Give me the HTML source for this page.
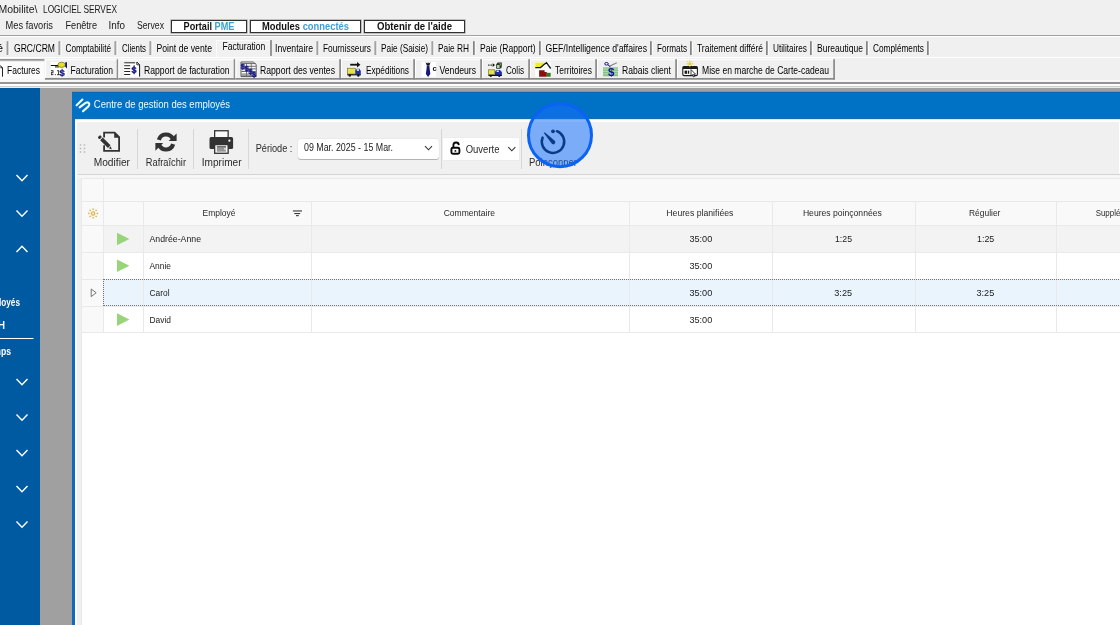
<!DOCTYPE html>
<html lang="fr">
<head>
<meta charset="utf-8">
<title>LOGICIEL SERVEX</title>
<style>
*{box-sizing:border-box;margin:0;padding:0}
html,body{width:1120px;height:625px;overflow:hidden;background:#f0f0f0}
body{position:relative;font-family:"Liberation Sans",sans-serif;font-size:11px;color:#000}
.a{position:absolute}
svg{position:absolute;left:0;top:0;overflow:visible;will-change:transform}
svg text{font-family:"Liberation Sans",sans-serif;white-space:pre}
#top{left:0;top:0;width:1120px;height:88px;background:#f0f0f0}
.mb{position:absolute;top:19.5px;height:13.5px;background:#fff;border:1px solid #303030;box-shadow:0 0 0 0.6px rgba(60,60,60,.45)}
.sep{position:absolute;top:41px;width:2px;height:14px;border-left:1px solid #6e6e6e;border-right:1px solid #fff}
.tb{position:absolute;top:59px;height:20px;border-top:1px solid #fff;border-left:1px solid #fff;border-right:1px solid #868686;border-bottom:1px solid #868686;background:#f0f0f0}
#side{left:0;top:88px;width:40px;height:537px;background:#005aa2}
#gray{left:40px;top:88px;width:1080px;height:537px;background:#a0a0a0}
#win{left:72px;top:92px;width:1048px;height:533px;background:#0072c6}
#inner{left:75px;top:118px;width:1045px;height:507px;background:#fff;border-top:1px solid #1b6cb6;box-shadow:inset 0 1px 0 #cdeeff}
#lb{left:72px;top:118px;width:3px;height:507px;background:#0f6cbd}
#panel{left:77px;top:122px;width:1042px;height:503px;background:#f0f0f0}
#grid{left:82px;top:178px;width:1038px;height:447px;background:#fff}
.vsep{position:absolute;top:129px;width:1px;height:40px;background:#d6d6d6}
.hl{position:absolute;height:1px;background:#e9e9e9}
.vl{position:absolute;width:1px;background:#e9e9e9}
</style>
</head>
<body>
<div id="top" class="a"></div>
<div class="mb" style="left:171px;width:75.5px"></div>
<div class="mb" style="left:250px;width:111px"></div>
<div class="mb" style="left:364px;width:100.5px"></div>
<div class="a" style="left:0;top:35px;width:1120px;height:1px;background:#a0a0a0"></div>
<div class="a" style="left:0;top:36px;width:1120px;height:1px;background:#fff"></div>
<div class="a" style="left:216px;top:40px;width:54px;height:17px;background:#f1f1f1;border-top:1px solid #fbfbfb;border-left:1px solid #fbfbfb"></div>
<div class="a" style="left:0;top:57px;width:1120px;height:1px;background:#fff"></div>
<div id="gray" class="a"></div>
<div id="side" class="a"></div>
<div id="win" class="a"></div>
<div id="lb" class="a"></div>
<div id="inner" class="a"></div>
<div id="panel" class="a"></div>
<div id="grid" class="a"></div>
<div class="a" style="left:78px;top:174px;width:1042px;height:1px;background:#d4d4d4"></div>
<div class="a" style="left:78px;top:175px;width:1042px;height:3px;background:#f6f6f6"></div>
<div class="vsep" style="left:137px"></div>
<div class="vsep" style="left:193px"></div>
<div class="vsep" style="left:248px"></div>
<div class="vsep" style="left:440.5px"></div>
<div class="vsep" style="left:520.5px"></div>
<div class="a" style="left:298px;top:139px;width:141px;height:19.5px;background:#fff;border-radius:3px;box-shadow:0 1px 0 #b4b4b4,0 0 0 0.5px #e2e2e2"></div>
<div class="a" style="left:443px;top:137.5px;width:76px;height:22.5px;background:#fff;box-shadow:0 0 0 0.5px #e8e8e8"></div>
<div class="a" style="left:82px;top:178px;width:1038px;height:47px;background:#f9f9f9"></div>
<div class="a" style="left:82px;top:225px;width:21px;height:108px;background:#f9f9f9"></div>
<div class="a" style="left:103px;top:225px;width:1017px;height:27px;background:#f3f3f3"></div>
<div class="a" style="left:103px;top:279px;width:1017px;height:27px;background:#e9f4fd"></div>
<div class="hl" style="left:82px;top:178px;width:1038px"></div>
<div class="hl" style="left:82px;top:201px;width:1038px"></div>
<div class="hl" style="left:82px;top:225px;width:1038px"></div>
<div class="hl" style="left:82px;top:252px;width:1038px"></div>
<div class="hl" style="left:82px;top:279px;width:1038px"></div>
<div class="hl" style="left:82px;top:306px;width:1038px"></div>
<div class="hl" style="left:82px;top:332px;width:1038px"></div>
<div class="vl" style="left:81px;top:178px;height:447px"></div>
<div class="vl" style="left:103px;top:178px;height:155px"></div>
<div class="vl" style="left:143px;top:201px;height:132px"></div>
<div class="vl" style="left:311px;top:201px;height:132px"></div>
<div class="vl" style="left:629px;top:201px;height:132px"></div>
<div class="vl" style="left:772px;top:201px;height:132px"></div>
<div class="vl" style="left:915px;top:201px;height:132px"></div>
<div class="vl" style="left:1056px;top:201px;height:132px"></div>
<div class="a" style="left:103px;top:279px;width:1020px;height:27px;border:1px dotted #777"></div>
<svg width="1120" height="625" viewBox="0 0 1120 625"><rect x="270.1" y="40.1" width="1.8" height="15.8" fill="#8c8c8c"/>
<rect x="6.699999999999999" y="41.2" width="1" height="13.8" fill="#787878"/><rect x="7.699999999999999" y="41.2" width="0.9" height="13.8" fill="#9a9a9a"/><rect x="8.6" y="41.2" width="1" height="13.8" fill="#f9f9f9"/>
<rect x="58.6" y="41.2" width="1" height="13.8" fill="#787878"/><rect x="59.6" y="41.2" width="0.9" height="13.8" fill="#9a9a9a"/><rect x="60.5" y="41.2" width="1" height="13.8" fill="#f9f9f9"/>
<rect x="114.6" y="41.2" width="1" height="13.8" fill="#787878"/><rect x="115.6" y="41.2" width="0.9" height="13.8" fill="#9a9a9a"/><rect x="116.5" y="41.2" width="1" height="13.8" fill="#f9f9f9"/>
<rect x="149.6" y="41.2" width="1" height="13.8" fill="#787878"/><rect x="150.6" y="41.2" width="0.9" height="13.8" fill="#9a9a9a"/><rect x="151.5" y="41.2" width="1" height="13.8" fill="#f9f9f9"/>
<rect x="316.6" y="41.2" width="1" height="13.8" fill="#787878"/><rect x="317.6" y="41.2" width="0.9" height="13.8" fill="#9a9a9a"/><rect x="318.5" y="41.2" width="1" height="13.8" fill="#f9f9f9"/>
<rect x="374.6" y="41.2" width="1" height="13.8" fill="#787878"/><rect x="375.6" y="41.2" width="0.9" height="13.8" fill="#9a9a9a"/><rect x="376.5" y="41.2" width="1" height="13.8" fill="#f9f9f9"/>
<rect x="431.6" y="41.2" width="1" height="13.8" fill="#787878"/><rect x="432.6" y="41.2" width="0.9" height="13.8" fill="#9a9a9a"/><rect x="433.5" y="41.2" width="1" height="13.8" fill="#f9f9f9"/>
<rect x="473.1" y="41.2" width="1" height="13.8" fill="#787878"/><rect x="474.1" y="41.2" width="0.9" height="13.8" fill="#9a9a9a"/><rect x="475" y="41.2" width="1" height="13.8" fill="#f9f9f9"/>
<rect x="539.1" y="41.2" width="1" height="13.8" fill="#787878"/><rect x="540.1" y="41.2" width="0.9" height="13.8" fill="#9a9a9a"/><rect x="541" y="41.2" width="1" height="13.8" fill="#f9f9f9"/>
<rect x="650.1" y="41.2" width="1" height="13.8" fill="#787878"/><rect x="651.1" y="41.2" width="0.9" height="13.8" fill="#9a9a9a"/><rect x="652" y="41.2" width="1" height="13.8" fill="#f9f9f9"/>
<rect x="690.1" y="41.2" width="1" height="13.8" fill="#787878"/><rect x="691.1" y="41.2" width="0.9" height="13.8" fill="#9a9a9a"/><rect x="692" y="41.2" width="1" height="13.8" fill="#f9f9f9"/>
<rect x="766.1" y="41.2" width="1" height="13.8" fill="#787878"/><rect x="767.1" y="41.2" width="0.9" height="13.8" fill="#9a9a9a"/><rect x="768" y="41.2" width="1" height="13.8" fill="#f9f9f9"/>
<rect x="810.1" y="41.2" width="1" height="13.8" fill="#787878"/><rect x="811.1" y="41.2" width="0.9" height="13.8" fill="#9a9a9a"/><rect x="812" y="41.2" width="1" height="13.8" fill="#f9f9f9"/>
<rect x="866.1" y="41.2" width="1" height="13.8" fill="#787878"/><rect x="867.1" y="41.2" width="0.9" height="13.8" fill="#9a9a9a"/><rect x="868" y="41.2" width="1" height="13.8" fill="#f9f9f9"/>
<rect x="927.1" y="41.2" width="1" height="13.8" fill="#787878"/><rect x="928.1" y="41.2" width="0.9" height="13.8" fill="#9a9a9a"/><rect x="929" y="41.2" width="1" height="13.8" fill="#f9f9f9"/>
<rect x="0" y="59.4" width="44.4" height="20.2" fill="#fbfbfb"/>
<rect x="0" y="59.1" width="44.4" height="1.7" fill="#8c8c8c"/>
<rect x="0" y="60.8" width="44.4" height="0.9" fill="#e4e4e4"/>
<rect x="45" y="59.2" width="73.5" height="20.4" fill="#f0f0f0"/>
<rect x="45" y="59.2" width="71.7" height="1" fill="#fff"/>
<rect x="45" y="59.2" width="1" height="18.8" fill="#fff"/>
<rect x="116.7" y="59.2" width="1.8" height="20.4" fill="#8f8f8f"/>
<rect x="45" y="78" width="73.5" height="1.7" fill="#8a8a8a"/>
<rect x="118.5" y="59.2" width="117.0" height="20.4" fill="#f0f0f0"/>
<rect x="118.5" y="59.2" width="115.2" height="1" fill="#fff"/>
<rect x="118.5" y="59.2" width="1" height="18.8" fill="#fff"/>
<rect x="233.7" y="59.2" width="1.8" height="20.4" fill="#8f8f8f"/>
<rect x="118.5" y="78" width="117.0" height="1.7" fill="#8a8a8a"/>
<rect x="235.5" y="59.2" width="105.5" height="20.4" fill="#f0f0f0"/>
<rect x="235.5" y="59.2" width="103.7" height="1" fill="#fff"/>
<rect x="235.5" y="59.2" width="1" height="18.8" fill="#fff"/>
<rect x="339.2" y="59.2" width="1.8" height="20.4" fill="#8f8f8f"/>
<rect x="235.5" y="78" width="105.5" height="1.7" fill="#8a8a8a"/>
<rect x="341" y="59.2" width="74" height="20.4" fill="#f0f0f0"/>
<rect x="341" y="59.2" width="72.2" height="1" fill="#fff"/>
<rect x="341" y="59.2" width="1" height="18.8" fill="#fff"/>
<rect x="413.2" y="59.2" width="1.8" height="20.4" fill="#8f8f8f"/>
<rect x="341" y="78" width="74" height="1.7" fill="#8a8a8a"/>
<rect x="415" y="59.2" width="67" height="20.4" fill="#f0f0f0"/>
<rect x="415" y="59.2" width="65.2" height="1" fill="#fff"/>
<rect x="415" y="59.2" width="1" height="18.8" fill="#fff"/>
<rect x="480.2" y="59.2" width="1.8" height="20.4" fill="#8f8f8f"/>
<rect x="415" y="78" width="67" height="1.7" fill="#8a8a8a"/>
<rect x="482" y="59.2" width="48" height="20.4" fill="#f0f0f0"/>
<rect x="482" y="59.2" width="46.2" height="1" fill="#fff"/>
<rect x="482" y="59.2" width="1" height="18.8" fill="#fff"/>
<rect x="528.2" y="59.2" width="1.8" height="20.4" fill="#8f8f8f"/>
<rect x="482" y="78" width="48" height="1.7" fill="#8a8a8a"/>
<rect x="530" y="59.2" width="67" height="20.4" fill="#f0f0f0"/>
<rect x="530" y="59.2" width="65.2" height="1" fill="#fff"/>
<rect x="530" y="59.2" width="1" height="18.8" fill="#fff"/>
<rect x="595.2" y="59.2" width="1.8" height="20.4" fill="#8f8f8f"/>
<rect x="530" y="78" width="67" height="1.7" fill="#8a8a8a"/>
<rect x="597" y="59.2" width="80" height="20.4" fill="#f0f0f0"/>
<rect x="597" y="59.2" width="78.2" height="1" fill="#fff"/>
<rect x="597" y="59.2" width="1" height="18.8" fill="#fff"/>
<rect x="675.2" y="59.2" width="1.8" height="20.4" fill="#8f8f8f"/>
<rect x="597" y="78" width="80" height="1.7" fill="#8a8a8a"/>
<rect x="677" y="59.2" width="158" height="20.4" fill="#f0f0f0"/>
<rect x="677" y="59.2" width="156.2" height="1" fill="#fff"/>
<rect x="677" y="59.2" width="1" height="18.8" fill="#fff"/>
<rect x="833.2" y="59.2" width="1.8" height="20.4" fill="#8f8f8f"/>
<rect x="677" y="78" width="158" height="1.7" fill="#8a8a8a"/>
<rect x="0" y="80" width="1120" height="2" fill="#f8f8f8"/>
<rect x="0" y="82" width="1120" height="2" fill="#949494"/>
<rect x="0" y="84" width="1120" height="2.2" fill="#fdfdfd"/>
<rect x="0" y="86.2" width="1120" height="1" fill="#c6c6c6"/>
<rect x="0" y="87.2" width="1120" height="0.8" fill="#ececec"/>
<rect x="72" y="91.8" width="1048" height="0.9" fill="#1462ab"/>
<text x="-1.5" y="13" font-size="10" font-weight="normal" fill="#1a1a1a" textLength="39.0" lengthAdjust="spacingAndGlyphs">Mobilite\</text>
<text x="43" y="13" font-size="10" font-weight="normal" fill="#1a1a1a" textLength="74" lengthAdjust="spacingAndGlyphs">LOGICIEL SERVEX</text>
<text x="5.5" y="29.3" font-size="10" font-weight="normal" fill="#1a1a1a" textLength="47.5" lengthAdjust="spacingAndGlyphs">Mes favoris</text>
<text x="65.5" y="29.3" font-size="10" font-weight="normal" fill="#1a1a1a" textLength="31.5" lengthAdjust="spacingAndGlyphs">Fenêtre</text>
<text x="108.5" y="29.3" font-size="10" font-weight="normal" fill="#1a1a1a" textLength="16.5" lengthAdjust="spacingAndGlyphs">Info</text>
<text x="137" y="29.3" font-size="10" font-weight="normal" fill="#1a1a1a" textLength="27" lengthAdjust="spacingAndGlyphs">Servex</text>
<text x="183.6" y="29.6" font-size="10.5" font-weight="bold" fill="#111" textLength="50.8" lengthAdjust="spacingAndGlyphs">Portail <tspan fill="#3c9fd6" font-weight="bold">PME</tspan></text>
<text x="262" y="29.6" font-size="10.5" font-weight="bold" fill="#111" textLength="87" lengthAdjust="spacingAndGlyphs">Modules <tspan fill="#3c9fd6" font-weight="bold">connectés</tspan></text>
<text x="377" y="29.6" font-size="10.5" font-weight="bold" fill="#111" textLength="75" lengthAdjust="spacingAndGlyphs">Obtenir de l&#x27;aide</text>
<text x="14" y="52.3" font-size="11" font-weight="normal" fill="#000" textLength="41" lengthAdjust="spacingAndGlyphs">GRC/CRM</text>
<text x="65.5" y="52.3" font-size="11" font-weight="normal" fill="#000" textLength="45.5" lengthAdjust="spacingAndGlyphs">Comptabilité</text>
<text x="122" y="52.3" font-size="11" font-weight="normal" fill="#000" textLength="24" lengthAdjust="spacingAndGlyphs">Clients</text>
<text x="156.5" y="52.3" font-size="11" font-weight="normal" fill="#000" textLength="55.5" lengthAdjust="spacingAndGlyphs">Point de vente</text>
<text x="275" y="52.3" font-size="11" font-weight="normal" fill="#000" textLength="38" lengthAdjust="spacingAndGlyphs">Inventaire</text>
<text x="323" y="52.3" font-size="11" font-weight="normal" fill="#000" textLength="48" lengthAdjust="spacingAndGlyphs">Fournisseurs</text>
<text x="381" y="52.3" font-size="11" font-weight="normal" fill="#000" textLength="47" lengthAdjust="spacingAndGlyphs">Paie (Saisie)</text>
<text x="438" y="52.3" font-size="11" font-weight="normal" fill="#000" textLength="31" lengthAdjust="spacingAndGlyphs">Paie RH</text>
<text x="480" y="52.3" font-size="11" font-weight="normal" fill="#000" textLength="55.5" lengthAdjust="spacingAndGlyphs">Paie (Rapport)</text>
<text x="545.5" y="52.3" font-size="11" font-weight="normal" fill="#000" textLength="101.5" lengthAdjust="spacingAndGlyphs">GEF/Intelligence d&#x27;affaires</text>
<text x="657" y="52.3" font-size="11" font-weight="normal" fill="#000" textLength="30" lengthAdjust="spacingAndGlyphs">Formats</text>
<text x="697" y="52.3" font-size="11" font-weight="normal" fill="#000" textLength="66" lengthAdjust="spacingAndGlyphs">Traitement différé</text>
<text x="773" y="52.3" font-size="11" font-weight="normal" fill="#000" textLength="34" lengthAdjust="spacingAndGlyphs">Utilitaires</text>
<text x="817" y="52.3" font-size="11" font-weight="normal" fill="#000" textLength="46" lengthAdjust="spacingAndGlyphs">Bureautique</text>
<text x="873" y="52.3" font-size="11" font-weight="normal" fill="#000" textLength="51" lengthAdjust="spacingAndGlyphs">Compléments</text>
<text x="-3" y="52.3" font-size="11" font-weight="normal" fill="#000" textLength="6" lengthAdjust="spacingAndGlyphs">é</text>
<text x="222.5" y="50.4" font-size="11" font-weight="normal" fill="#000" textLength="42.69999999999999" lengthAdjust="spacingAndGlyphs">Facturation</text>
<text x="7" y="73.6" font-size="11" font-weight="normal" fill="#000" textLength="33" lengthAdjust="spacingAndGlyphs">Factures</text>
<text x="70.5" y="73.6" font-size="11" font-weight="normal" fill="#000" textLength="42.5" lengthAdjust="spacingAndGlyphs">Facturation</text>
<text x="144" y="73.6" font-size="11" font-weight="normal" fill="#000" textLength="85.5" lengthAdjust="spacingAndGlyphs">Rapport de facturation</text>
<text x="260" y="73.6" font-size="11" font-weight="normal" fill="#000" textLength="75" lengthAdjust="spacingAndGlyphs">Rapport des ventes</text>
<text x="366" y="73.6" font-size="11" font-weight="normal" fill="#000" textLength="43" lengthAdjust="spacingAndGlyphs">Expéditions</text>
<text x="439.5" y="73.6" font-size="11" font-weight="normal" fill="#000" textLength="36.5" lengthAdjust="spacingAndGlyphs">Vendeurs</text>
<text x="506" y="73.6" font-size="11" font-weight="normal" fill="#000" textLength="18" lengthAdjust="spacingAndGlyphs">Colis</text>
<text x="555" y="73.6" font-size="11" font-weight="normal" fill="#000" textLength="37" lengthAdjust="spacingAndGlyphs">Territoires</text>
<text x="622" y="73.6" font-size="11" font-weight="normal" fill="#000" textLength="49" lengthAdjust="spacingAndGlyphs">Rabais client</text>
<text x="702" y="73.6" font-size="11" font-weight="normal" fill="#000" textLength="127" lengthAdjust="spacingAndGlyphs">Mise en marche de Carte-cadeau</text>
<polyline points="16.5,175 22,180.8 27.5,175" fill="none" stroke="#fff" stroke-width="1.4"/>
<polyline points="16.5,210.5 22,216.3 27.5,210.5" fill="none" stroke="#fff" stroke-width="1.4"/>
<polyline points="16.5,252 22,246.2 27.5,252" fill="none" stroke="#fff" stroke-width="1.4"/>
<polyline points="16.5,379 22,384.8 27.5,379" fill="none" stroke="#fff" stroke-width="1.4"/>
<polyline points="16.5,414.5 22,420.3 27.5,414.5" fill="none" stroke="#fff" stroke-width="1.4"/>
<polyline points="16.5,450 22,455.8 27.5,450" fill="none" stroke="#fff" stroke-width="1.4"/>
<polyline points="16.5,486 22,491.8 27.5,486" fill="none" stroke="#fff" stroke-width="1.4"/>
<polyline points="16.5,521.5 22,527.3 27.5,521.5" fill="none" stroke="#fff" stroke-width="1.4"/>
<rect x="0" y="338" width="33.5" height="1" fill="#fff"/>
<text x="-1" y="305.5" font-size="10" font-weight="bold" fill="#fff" textLength="21" lengthAdjust="spacingAndGlyphs">loyés</text>
<text x="-2" y="329" font-size="10" font-weight="bold" fill="#fff" textLength="7" lengthAdjust="spacingAndGlyphs">H</text>
<text x="-6.8" y="354.5" font-size="10" font-weight="bold" fill="#fff" textLength="17.8" lengthAdjust="spacingAndGlyphs">mps</text>
<g fill="none" stroke="#eefaff" stroke-width="2.1" stroke-linecap="round" stroke-linejoin="round"><path d="M76.6 105.3 L82.4 99.6"/><path d="M79.6 107.4 L85.6 102.9 Q88 101.6 89.2 103.6 Q89.8 105.2 88.4 106.4 L83 111.3"/></g>
<text x="93.8" y="108.4" font-size="10.5" font-weight="normal" fill="#f0f9ff" textLength="136.2" lengthAdjust="spacingAndGlyphs">Centre de gestion des employés</text>
<rect x="79.75" y="144.25" width="1.5" height="1.5" fill="#b8b8b8"/>
<rect x="79.75" y="147.75" width="1.5" height="1.5" fill="#b8b8b8"/>
<rect x="79.75" y="151.25" width="1.5" height="1.5" fill="#b8b8b8"/>
<rect x="83.75" y="144.25" width="1.5" height="1.5" fill="#b8b8b8"/>
<rect x="83.75" y="147.75" width="1.5" height="1.5" fill="#b8b8b8"/>
<rect x="83.75" y="151.25" width="1.5" height="1.5" fill="#b8b8b8"/>
<g fill="none" stroke="#333" stroke-width="1.8" stroke-linejoin="miter"><path d="M104.1 137.6 V132.7 H114.6 L119.1 137.2 V150.9 H104.1 V145.3"/></g><path d="M114.2 132 L119.9 137.7 H114.2 Z" fill="#333"/><g transform="translate(99.2 136.6) rotate(45)"><rect x="-0.6" y="-1.8" width="2.9" height="3.6" rx="1.1" fill="#333"/><rect x="3.2" y="-1.8" width="11" height="3.6" fill="#333"/><path d="M15 -1.5 L18 0.3 L15 1.5 Z" fill="#333"/></g>
<g fill="none" stroke="#333" stroke-width="4.2" stroke-linecap="butt"><path d="M158.83 139.81 A7.5 7.5 0 0 1 172.8 138.83"/><path d="M173.17 144.19 A7.5 7.5 0 0 1 159.2 145.17"/></g><path d="M176.6 133.6 V140.9 H168.6 Z" fill="#333"/><path d="M155.4 150.8 V143.1 H163.2 Z" fill="#333"/>
<rect x="214.65" y="130.75" width="13.5" height="7" fill="#fafafa" stroke="#333" stroke-width="1.3"/><rect x="209.5" y="137.1" width="23.6" height="12" rx="1.6" fill="#333"/><rect x="214.65" y="144.6" width="13.5" height="8.7" fill="#f4f4f4" stroke="#333" stroke-width="1.3"/><rect x="216.9" y="146.3" width="9" height="5.4" fill="#969696"/><rect x="216.9" y="146.3" width="9" height="0.9" fill="#555"/><rect x="224" y="148.3" width="1.9" height="1.2" fill="#f4f4f4"/><circle cx="229.4" cy="140.7" r="1.1" fill="#fff"/>
<text x="93.7" y="166" font-size="10" font-weight="normal" fill="#2a2a2a" textLength="36.3" lengthAdjust="spacingAndGlyphs">Modifier</text>
<text x="145.8" y="166" font-size="10" font-weight="normal" fill="#2a2a2a" textLength="40.19999999999999" lengthAdjust="spacingAndGlyphs">Rafraîchir</text>
<text x="201.8" y="166" font-size="10" font-weight="normal" fill="#2a2a2a" textLength="39.79999999999998" lengthAdjust="spacingAndGlyphs">Imprimer</text>
<text x="255.7" y="151.5" font-size="10" font-weight="normal" fill="#2a2a2a" textLength="36.69999999999999" lengthAdjust="spacingAndGlyphs">Période :</text>
<text x="304" y="151" font-size="10" font-weight="normal" fill="#222" textLength="89" lengthAdjust="spacingAndGlyphs">09 Mar. 2025 - 15 Mar.</text>
<polyline points="425,146.2 428.5,149.8 432,146.2" fill="none" stroke="#333" stroke-width="1.1"/>
<rect x="451.4" y="147.7" width="8" height="6" rx="1.5" fill="none" stroke="#0a0a0a" stroke-width="1.9"/><path d="M453.4 147.2 V145.3 A2.7 2.7 0 0 1 458.8 145.1" fill="none" stroke="#0a0a0a" stroke-width="1.8"/><circle cx="455.4" cy="150.9" r="0.95" fill="#0a0a0a"/>
<text x="465.7" y="152.6" font-size="10" font-weight="normal" fill="#2a2a2a" textLength="33.80000000000001" lengthAdjust="spacingAndGlyphs">Ouverte</text>
<polyline points="508.3,147.2 511.8,150.8 515.3,147.2" fill="none" stroke="#333" stroke-width="1.1"/>
<text x="529" y="166" font-size="10" font-weight="normal" fill="#2a2a2a" textLength="48" lengthAdjust="spacingAndGlyphs">Poinçonner</text>
<g id="sw"><path d="M556.9 131.2 A11.2 11.2 0 1 1 542.6 137.6" fill="none" stroke="#000" stroke-width="2.5" stroke-linecap="round"/><circle cx="553" cy="131.3" r="1.9" fill="#000"/><path d="M543.6 132.8 L545 132.5 L555 140.9 Q555.9 142.6 554.5 143.9 Q553 145 551.7 143.6 Z" fill="#000"/></g>
<circle cx="93.1" cy="213.4" r="5.6" fill="#fff4c8" opacity="0.5"/><g stroke="#c2ad8c" stroke-width="1.2" fill="none"><circle cx="93.1" cy="213.4" r="1.7" stroke="#d9b266" fill="#fdeea0" stroke-width="1.1"/><line x1="96.60" y1="213.40" x2="98.10" y2="213.40"/><line x1="95.57" y1="215.87" x2="96.64" y2="216.94"/><line x1="93.10" y1="216.90" x2="93.10" y2="218.40"/><line x1="90.63" y1="215.87" x2="89.56" y2="216.94"/><line x1="89.60" y1="213.40" x2="88.10" y2="213.40"/><line x1="90.63" y1="210.93" x2="89.56" y2="209.86"/><line x1="93.10" y1="209.90" x2="93.10" y2="208.40"/><line x1="95.57" y1="210.93" x2="96.64" y2="209.86"/></g>
<rect x="292.9" y="210.1" width="9.1" height="1.7" fill="#7c7c7c"/><rect x="294.3" y="213" width="5.9" height="1.1" fill="#3a3a3a"/><rect x="296" y="215.1" width="2.8" height="1.1" fill="#3a3a3a"/>
<text x="202.5" y="216" font-size="9.5" font-weight="normal" fill="#2a2a2a" textLength="33.0" lengthAdjust="spacingAndGlyphs">Employé</text>
<text x="443.7" y="216" font-size="9.5" font-weight="normal" fill="#2a2a2a" textLength="51.30000000000001" lengthAdjust="spacingAndGlyphs">Commentaire</text>
<text x="666.3" y="216" font-size="9.5" font-weight="normal" fill="#2a2a2a" textLength="67.10000000000002" lengthAdjust="spacingAndGlyphs">Heures planifiées</text>
<text x="802.9" y="216" font-size="9.5" font-weight="normal" fill="#2a2a2a" textLength="78.89999999999998" lengthAdjust="spacingAndGlyphs">Heures poinçonnées</text>
<text x="969" y="216" font-size="9.5" font-weight="normal" fill="#2a2a2a" textLength="31.399999999999977" lengthAdjust="spacingAndGlyphs">Régulier</text>
<text x="1095.7" y="216" font-size="9.5" font-weight="normal" fill="#2a2a2a" textLength="55.299999999999955" lengthAdjust="spacingAndGlyphs">Supplémentaire</text>
<path d="M117 232.7 L129.4 239 L117 245.3 Z" fill="#97d47a"/>
<path d="M117 259.5 L129.4 265.8 L117 272.1 Z" fill="#97d47a"/>
<path d="M117 313.3 L129.4 319.6 L117 325.90000000000003 Z" fill="#97d47a"/>
<path d="M91.2 289 L96.2 292.8 L91.2 296.6 Z" fill="none" stroke="#666" stroke-width="0.9"/>
<text x="149.5" y="241.7" font-size="9.5" font-weight="normal" fill="#222" textLength="51.5" lengthAdjust="spacingAndGlyphs">Andrée-Anne</text>
<text x="149.5" y="268.8" font-size="9.5" font-weight="normal" fill="#222" textLength="21.5" lengthAdjust="spacingAndGlyphs">Annie</text>
<text x="149.5" y="295.5" font-size="9.5" font-weight="normal" fill="#222" textLength="20.0" lengthAdjust="spacingAndGlyphs">Carol</text>
<text x="149.5" y="322.5" font-size="9.5" font-weight="normal" fill="#222" textLength="21.5" lengthAdjust="spacingAndGlyphs">David</text>
<text x="689.4" y="241.7" font-size="9.5" font-weight="normal" fill="#222" textLength="22.899999999999977" lengthAdjust="spacingAndGlyphs">35:00</text>
<text x="689.4" y="268.8" font-size="9.5" font-weight="normal" fill="#222" textLength="22.899999999999977" lengthAdjust="spacingAndGlyphs">35:00</text>
<text x="689.4" y="295.5" font-size="9.5" font-weight="normal" fill="#222" textLength="22.899999999999977" lengthAdjust="spacingAndGlyphs">35:00</text>
<text x="689.4" y="322.5" font-size="9.5" font-weight="normal" fill="#222" textLength="22.899999999999977" lengthAdjust="spacingAndGlyphs">35:00</text>
<text x="835" y="241.7" font-size="9.5" font-weight="normal" fill="#222" textLength="17" lengthAdjust="spacingAndGlyphs">1:25</text>
<text x="977" y="241.7" font-size="9.5" font-weight="normal" fill="#222" textLength="17.299999999999955" lengthAdjust="spacingAndGlyphs">1:25</text>
<text x="834.3" y="295.5" font-size="9.5" font-weight="normal" fill="#222" textLength="17.700000000000045" lengthAdjust="spacingAndGlyphs">3:25</text>
<text x="976.5" y="295.5" font-size="9.5" font-weight="normal" fill="#222" textLength="17.799999999999955" lengthAdjust="spacingAndGlyphs">3:25</text>
<path d="M-0.5 65.2 L2.5 67.6 V76.7 M0.4 67.7 H2.5" fill="none" stroke="#222" stroke-width="1"/>
<rect x="50.8" y="62" width="16.4" height="14.5" fill="#fff"/><rect x="50.8" y="65" width="7.5" height="1" fill="#111"/><rect x="55" y="66.4" width="4" height="1" fill="#111"/><ellipse cx="61.6" cy="64.8" rx="3.7" ry="2.6" fill="#e6e01e" stroke="#6d6a12" stroke-width="0.7"/><path d="M65.2 62.2 H67 V68.6 L65.2 66.8 Z" fill="#15156e"/><rect x="51.00" y="70.20" width="0.83" height="1.03" fill="#111"/><rect x="51.78" y="70.20" width="0.83" height="1.03" fill="#111"/><rect x="52.56" y="70.20" width="0.83" height="1.03" fill="#111"/><rect x="57.24" y="70.20" width="0.83" height="1.03" fill="#111"/><rect x="58.02" y="70.20" width="0.83" height="1.03" fill="#111"/><rect x="52.56" y="71.18" width="0.83" height="1.03" fill="#111"/><rect x="58.02" y="71.18" width="0.83" height="1.03" fill="#111"/><rect x="51.00" y="72.16" width="0.83" height="1.03" fill="#111"/><rect x="51.78" y="72.16" width="0.83" height="1.03" fill="#111"/><rect x="52.56" y="72.16" width="0.83" height="1.03" fill="#111"/><rect x="58.02" y="72.16" width="0.83" height="1.03" fill="#111"/><rect x="51.00" y="73.14" width="0.83" height="1.03" fill="#111"/><rect x="58.02" y="73.14" width="0.83" height="1.03" fill="#111"/><rect x="51.00" y="74.12" width="0.83" height="1.03" fill="#111"/><rect x="51.78" y="74.12" width="0.83" height="1.03" fill="#111"/><rect x="52.56" y="74.12" width="0.83" height="1.03" fill="#111"/><rect x="54.90" y="74.12" width="0.83" height="1.03" fill="#111"/><rect x="57.24" y="74.12" width="0.83" height="1.03" fill="#111"/><rect x="58.02" y="74.12" width="0.83" height="1.03" fill="#111"/><rect x="58.80" y="74.12" width="0.83" height="1.03" fill="#111"/><text x="59.6" y="76.1" font-size="9.5" font-weight="bold" fill="#1a1a8c" stroke="#1a1a8c" stroke-width="0.35" textLength="5.2" lengthAdjust="spacingAndGlyphs">$</text>
<path d="M124 62 H137 L139.8 64.8 V76.6 H124 Z" fill="#fff"/><path d="M136.8 62 L139.6 64.8 V76.6" fill="none" stroke="#111" stroke-width="1"/><path d="M136.8 62 V64.8 H139.6" fill="none" stroke="#111" stroke-width="0.8"/><rect x="124.2" y="62.3" width="11" height="1" fill="#222"/><rect x="124.2" y="65.2" width="6" height="1" fill="#222"/><rect x="124.2" y="68.1" width="6" height="1" fill="#222"/><rect x="124.2" y="71" width="6" height="1" fill="#222"/><rect x="124.2" y="74" width="6" height="1" fill="#222"/><text x="131.6" y="73.4" font-size="9" font-weight="bold" fill="#1a1a8c" stroke="#1a1a8c" stroke-width="0.35" textLength="5" lengthAdjust="spacingAndGlyphs">$</text><rect x="133.7" y="65.3" width="0.9" height="9" fill="#1a1a8c"/>
<path d="M241 62 H253.4 L256.2 64.8 V76.6 H241 Z" fill="#fff" stroke="#333" stroke-width="0.8"/><rect x="241.5" y="63.2" width="14.2" height="0.9" fill="#555"/><rect x="241.5" y="65.8" width="14.2" height="0.9" fill="#555"/><rect x="241.5" y="68.4" width="14.2" height="0.9" fill="#555"/><rect x="241.5" y="71" width="14.2" height="0.9" fill="#555"/><rect x="241.5" y="73.6" width="14.2" height="0.9" fill="#555"/><rect x="241.5" y="75.4" width="14.2" height="0.9" fill="#555"/><rect x="246.2" y="63" width="0.8" height="13" fill="#666"/><rect x="250.8" y="63" width="0.8" height="13" fill="#666"/><text x="240.8" y="68.6" font-size="7.4" font-weight="bold" fill="#1a1a8c" stroke="#1a1a8c" stroke-width="0.4">$</text><text x="244.8" y="71.4" font-size="7.4" font-weight="bold" fill="#1a1a8c" stroke="#1a1a8c" stroke-width="0.4">$</text><text x="248.6" y="74.2" font-size="7.4" font-weight="bold" fill="#1a1a8c" stroke="#1a1a8c" stroke-width="0.4">$</text><text x="252" y="77" font-size="7.4" font-weight="bold" fill="#1a1a8c" stroke="#1a1a8c" stroke-width="0.4">$</text>
<rect x="350.2" y="63.8" width="8" height="1.8" fill="#111"/><path d="M357 62 L360.4 64.7 L357 67.4 Z" fill="#111"/><rect x="347.3" y="68.2" width="8" height="5.8" fill="#e8e24a" stroke="#6b6820" stroke-width="0.6"/><path d="M355.4 74.4 V70.6 L356.8 68.8 H359.4 L360.8 71 V74.4 Z" fill="#1c2db4"/><rect x="356.8" y="69.2" width="2.2" height="1.7" fill="#dfe6ff"/><rect x="347.3" y="74.2" width="13.5" height="1.2" fill="#111"/><circle cx="349.8" cy="75.6" r="1.2" fill="#111"/><circle cx="358.3" cy="75.6" r="1.2" fill="#111"/>
<rect x="421.6" y="62" width="14.4" height="14.8" fill="#fff"/><path d="M425.6 62.2 L427.4 63.6 L428.1 62 L428.8 63.6 L430.6 62.2 L429.4 65.4 H426.8 Z" fill="#111"/><path d="M426.9 65.4 H429.3 L430.3 74 L428.1 77 L425.9 74 Z" fill="#16167a"/><text x="432.4" y="70.8" font-size="7.5" font-weight="bold" fill="#111">c</text>
<rect x="488" y="64.6" width="1.6" height="1" fill="#111"/><rect x="490.4" y="64.6" width="1.6" height="1" fill="#111"/><path d="M492.6 63.2 L495 65.1 L492.6 67 Z" fill="#111"/><path d="M496.2 64.2 L497.8 62.6 H501.8 V67.2 L500.2 68.8 H496.2 Z" fill="#1f3a1f"/><rect x="497" y="65" width="2.6" height="3" fill="#b9c9b9"/><path d="M498.4 63.4 H501 V66.2 L500.2 64.4 Z" fill="#8fa68f"/><rect x="488.4" y="69.8" width="6.4" height="4.8" fill="#e8e24a" stroke="#6b6820" stroke-width="0.6"/><path d="M495 75.4 V71.6 L496.4 70 H500 L501.9 72 V75.4 Z" fill="#1c2db4"/><rect x="496.6" y="70.5" width="2.2" height="1.5" fill="#dfe6ff"/><rect x="488.4" y="74.8" width="13.5" height="1.2" fill="#111"/><circle cx="490.8" cy="76" r="1.1" fill="#111"/><circle cx="499.3" cy="76" r="1.1" fill="#111"/>
<rect x="535.3" y="62" width="15.4" height="14.8" fill="#fff"/><path d="M535.3 62.4 H545 L544.2 64.4 L540.6 67.5 H535.3 Z" fill="#f1ee25"/><path d="M535.3 67.6 H540.5 L544 64.5 L546.5 62.7 L548.4 65.4 L550.7 68.5" fill="none" stroke="#111" stroke-width="1.3"/><path d="M539.1 70.2 H544.6 V72 H546.8 V76.7 H539.1 Z" fill="#8a1010"/><rect x="546.8" y="72.8" width="3.9" height="3.9" fill="#2f7d1f"/>
<rect x="603" y="67.3" width="15" height="9" fill="#88c288"/><path d="M603 69 H618 M603 71.4 H618 M603 73.8 H618" stroke="#c2e0c2" stroke-width="0.8"/><path d="M609.2 66.4 L616.8 62.8" stroke="#8a8a8a" stroke-width="1.2"/><ellipse cx="606.5" cy="63.8" rx="1.8" ry="1.3" fill="none" stroke="#16167a" stroke-width="1"/><path d="M607.8 64.6 L610.4 67" stroke="#16167a" stroke-width="1"/><text x="608" y="76.4" font-size="11" font-weight="bold" fill="#1010a0" textLength="6.4" lengthAdjust="spacingAndGlyphs">$</text>
<rect x="682.8" y="66.6" width="14.6" height="9" rx="1.3" fill="#fff" stroke="#1a1a1a" stroke-width="1.1"/><rect x="682.8" y="66.6" width="14.6" height="2.4" fill="#1a1a1a"/><rect x="684.6" y="70.6" width="2.4" height="3.2" fill="#1a1a1a"/><rect x="687.8" y="70.6" width="1.4" height="3.2" fill="#1a1a1a"/><circle cx="689.8" cy="63.8" r="1.5" fill="#e8d11c"/><line x1="691.90" y1="63.80" x2="693.20" y2="63.80" stroke="#d7c11a" stroke-width="0.9"/><line x1="691.28" y1="65.28" x2="692.20" y2="66.20" stroke="#d7c11a" stroke-width="0.9"/><line x1="689.80" y1="65.90" x2="689.80" y2="67.20" stroke="#d7c11a" stroke-width="0.9"/><line x1="688.32" y1="65.28" x2="687.40" y2="66.20" stroke="#d7c11a" stroke-width="0.9"/><line x1="687.70" y1="63.80" x2="686.40" y2="63.80" stroke="#d7c11a" stroke-width="0.9"/><line x1="688.32" y1="62.32" x2="687.40" y2="61.40" stroke="#d7c11a" stroke-width="0.9"/><line x1="689.80" y1="61.70" x2="689.80" y2="60.40" stroke="#d7c11a" stroke-width="0.9"/><line x1="691.28" y1="62.32" x2="692.20" y2="61.40" stroke="#d7c11a" stroke-width="0.9"/><path d="M691 69.6 V76 L692.5 74.6 L693.6 77 L694.6 76.5 L693.6 74.2 L695.6 74.2 Z" fill="#fff" stroke="#111" stroke-width="0.8"/></svg>
<svg width="1120" height="625" viewBox="0 0 1120 625"><circle cx="560" cy="135.15" r="31.5" fill="rgba(19,112,255,0.53)" stroke="#0b63f3" stroke-width="3"/></svg>
</body>
</html>
